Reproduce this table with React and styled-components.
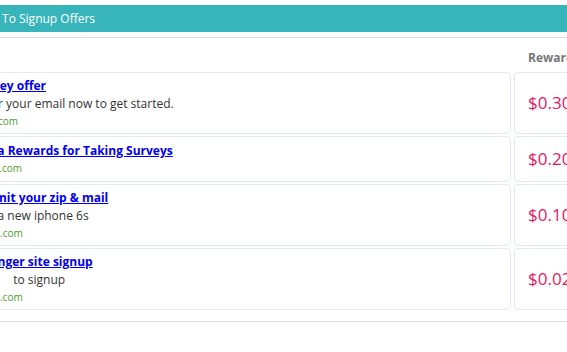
import React from 'react';
import styled, { createGlobalStyle } from 'styled-components';

const GlobalStyle = createGlobalStyle`
  html, body {
    margin: 0;
    padding: 0;
    background: #fff;
    overflow: hidden;
  }
  body {
    font-family: 'Open Sans', 'Liberation Sans', sans-serif;
  }
`;

const offers = [
  {
    title: 'Survey offer',
    desc: 'Enter your email now to get started.',
    site: 'imail.com',
    reward: '$0.30',
  },
  {
    title: 'Extra Rewards for Taking Surveys',
    site: 'mpoll.com',
    reward: '$0.20',
  },
  {
    title: 'Submit your zip & mail',
    desc: 'Win a new iphone 6s',
    site: 'prizer.com',
    reward: '$0.10',
  },
  {
    title: 'Stranger site signup',
    desc: 'Free\u00a0\u00a0\u00a0\u00a0 to signup',
    site: 'motel.com',
    reward: '$0.02',
  },
];

const App = () => {
  return (
    <>
      <GlobalStyle />
      <Page>
        <Header>Go To Signup Offers</Header>
        <Table>
          <HeadRow>
            <span />
            <HeadLabel>Reward</HeadLabel>
          </HeadRow>
          <Rows>
            {offers.map((offer) => (
              <Row key={offer.title}>
                <OfferCell>
                  <OfferTitle href='#'>{offer.title}</OfferTitle>
                  {offer.desc && <OfferDesc>{offer.desc}</OfferDesc>}
                  <OfferSite>{offer.site}</OfferSite>
                </OfferCell>
                <RewardCell>{offer.reward}</RewardCell>
              </Row>
            ))}
          </Rows>
        </Table>
      </Page>
    </>
  );
};

export default App;

const Page = styled.div`
  width: 660px;
  margin-left: -36px;
  padding-top: 5px;
`;

const Header = styled.div`
  height: 27px;
  display: flex;
  align-items: center;
  padding-left: 19px;
  background: #37b5bb;
  color: #fff;
  font-size: 12px;
`;

const Table = styled.div`
  margin-top: 5px;
  border-top: 1px solid #dddddd;
  border-bottom: 1px solid #dddddd;
  padding-bottom: 11px;
`;

const HeadRow = styled.div`
  display: grid;
  grid-template-columns: 1fr 110px;
  column-gap: 3px;
  height: 34px;
  align-items: center;
`;

const HeadLabel = styled.span`
  padding-left: 14px;
  padding-top: 4px;
  font-size: 12px;
  font-weight: 700;
  color: #777;
`;

const Rows = styled.div`
  display: flex;
  flex-direction: column;
  row-gap: 2px;
`;

const Row = styled.div`
  display: grid;
  grid-template-columns: 1fr 110px;
  column-gap: 3px;
`;

const Cell = styled.div`
  border: 1px solid #e2e7fb;
  border-radius: 4px;
`;

const OfferCell = styled(Cell)`
  display: flex;
  flex-direction: column;
  justify-content: center;
  padding: 4px 8px;
`;

const OfferTitle = styled.a`
  font-size: 12px;
  line-height: 18px;
  font-weight: 700;
  color: #0000ee;
  text-decoration: underline;
  white-space: nowrap;
`;

const OfferDesc = styled.div`
  font-size: 12px;
  line-height: 18px;
  color: #333;
  white-space: pre;
`;

const OfferSite = styled.div`
  font-size: 10px;
  line-height: 16px;
  color: #4f9a2c;
  white-space: nowrap;
`;

const RewardCell = styled(Cell)`
  display: flex;
  align-items: center;
  padding: 10px 13px;
  font-size: 17px;
  line-height: 24px;
  color: #e2185f;
`;
